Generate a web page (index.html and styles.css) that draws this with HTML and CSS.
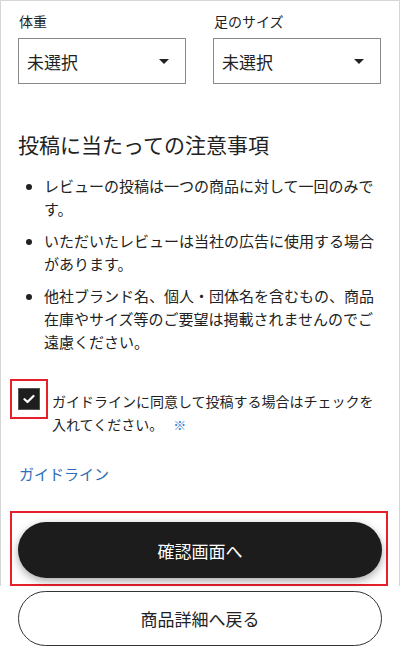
FILE: index.html
```html
<!DOCTYPE html>
<html lang="ja">
<head>
    <meta charset="UTF-8">
    <meta name="viewport" content="width=device-width, initial-scale=1.0">
    <title>レビュー投稿</title>
    <link rel="stylesheet" href="styles.css">
</head>
<body>
    <div class="frame">
        <div class="select-row">
            <div class="field">
                <div class="field-label">体重</div>
                <div class="select-box">
                    <span>未選択</span>
                    <span class="caret"></span>
                </div>
            </div>
            <div class="field">
                <div class="field-label">足のサイズ</div>
                <div class="select-box">
                    <span>未選択</span>
                    <span class="caret"></span>
                </div>
            </div>
        </div>

        <h2 class="notes-title">投稿に当たっての注意事項</h2>
        <ul class="notes">
            <li>レビューの投稿は一つの商品に対して一回のみです。</li>
            <li>いただいたレビューは当社の広告に使用する場合があります。</li>
            <li>他社ブランド名、個人・団体名を含むもの、商品在庫やサイズ等のご要望は掲載されませんのでご遠慮ください。</li>
        </ul>

        <div class="agree">
            <div class="mark check-mark">
                <span class="checkbox">
                    <svg width="12" height="10" viewBox="0 0 12 10">
                        <path d="M1.5 5.2 L4.5 8 L10.5 2" fill="none" stroke="#ffffff" stroke-width="2.2" stroke-linecap="round" stroke-linejoin="round"/>
                    </svg>
                </span>
            </div>
            <p class="agree-text">ガイドラインに同意して投稿する場合はチェックを入れてください。<span class="req">※</span></p>
        </div>

        <a class="guide-link" href="#">ガイドライン</a>

        <div class="mark btn-mark">
            <button class="btn btn-primary">確認画面へ</button>
        </div>
    </div>
    <div class="bottom">
        <button class="btn btn-secondary">商品詳細へ戻る</button>
    </div>
</body>
</html>
```

FILE: styles.css
```css
body {
    margin: 0;
    font-family: "Noto Sans CJK JP", "Noto Sans", sans-serif;
    color: #222222;
    background-color: #ffffff;
}
.frame {
    width: 400px;
    box-sizing: border-box;
    border: 1px solid #d6d6d6;
    border-bottom: none;
    padding: 10px 17px 0 17px;
}
.select-row {
    display: flex;
    gap: 27px;
}
.field {
    width: 168px;
}
.field-label {
    font-size: 14px;
    line-height: 20px;
    margin-left: 1px;
    margin-bottom: 7px;
}
.select-box {
    height: 46px;
    box-sizing: border-box;
    border: 1px solid #8a8a8a;
    display: flex;
    align-items: center;
    justify-content: space-between;
    padding: 0 16px 0 8px;
    font-size: 17px;
}
.caret {
    width: 0;
    height: 0;
    border-left: 5px solid transparent;
    border-right: 5px solid transparent;
    border-top: 5px solid #222222;
}
.notes-title {
    font-size: 21px;
    font-weight: normal;
    line-height: 30px;
    margin: 45px 0 15px 0;
}
.notes {
    margin: 0;
    padding-left: 26px;
    font-size: 15px;
    line-height: 23px;
}
.notes li {
    margin-bottom: 9px;
}
.agree {
    display: flex;
    align-items: flex-start;
    margin: 26px 0 0 -8px;
}
.mark {
    border: 2px solid #e5202b;
}
.check-mark {
    padding: 7px 6px 7px 6px;
    flex-shrink: 0;
}
.checkbox {
    width: 22px;
    height: 22px;
    background-color: #1e1e1e;
    border: 1px solid #555555;
    box-sizing: border-box;
    display: flex;
    align-items: center;
    justify-content: center;
}
.agree-text {
    margin: 11px 0 0 4px;
    font-size: 14px;
    line-height: 23px;
}
.req {
    display: inline-block;
    color: #3a78d0;
    font-size: 13px;
    margin-left: 10px;
}
.guide-link {
    display: block;
    width: fit-content;
    margin: 27px 0 0 1px;
    font-size: 15px;
    line-height: 22px;
    color: #2f6db8;
    text-decoration: none;
}
.btn-mark {
    margin: 26px 0 0 -8px;
    width: 364px;
    padding: 9px 4px 6px 6px;
}
.btn {
    display: block;
    width: 364px;
    height: 56px;
    border-radius: 28px;
    font-family: inherit;
    font-size: 17px;
    cursor: pointer;
}
.btn-primary {
    background-color: #1c1c1c;
    color: #ffffff;
    border: none;
    box-shadow: 0 3px 8px rgba(0, 0, 0, 0.35);
}
.bottom {
    padding: 5px 18px 0 18px;
}
.btn-secondary {
    background-color: #ffffff;
    color: #222222;
    border: 1px solid #333333;
    height: 55px;
}
```
